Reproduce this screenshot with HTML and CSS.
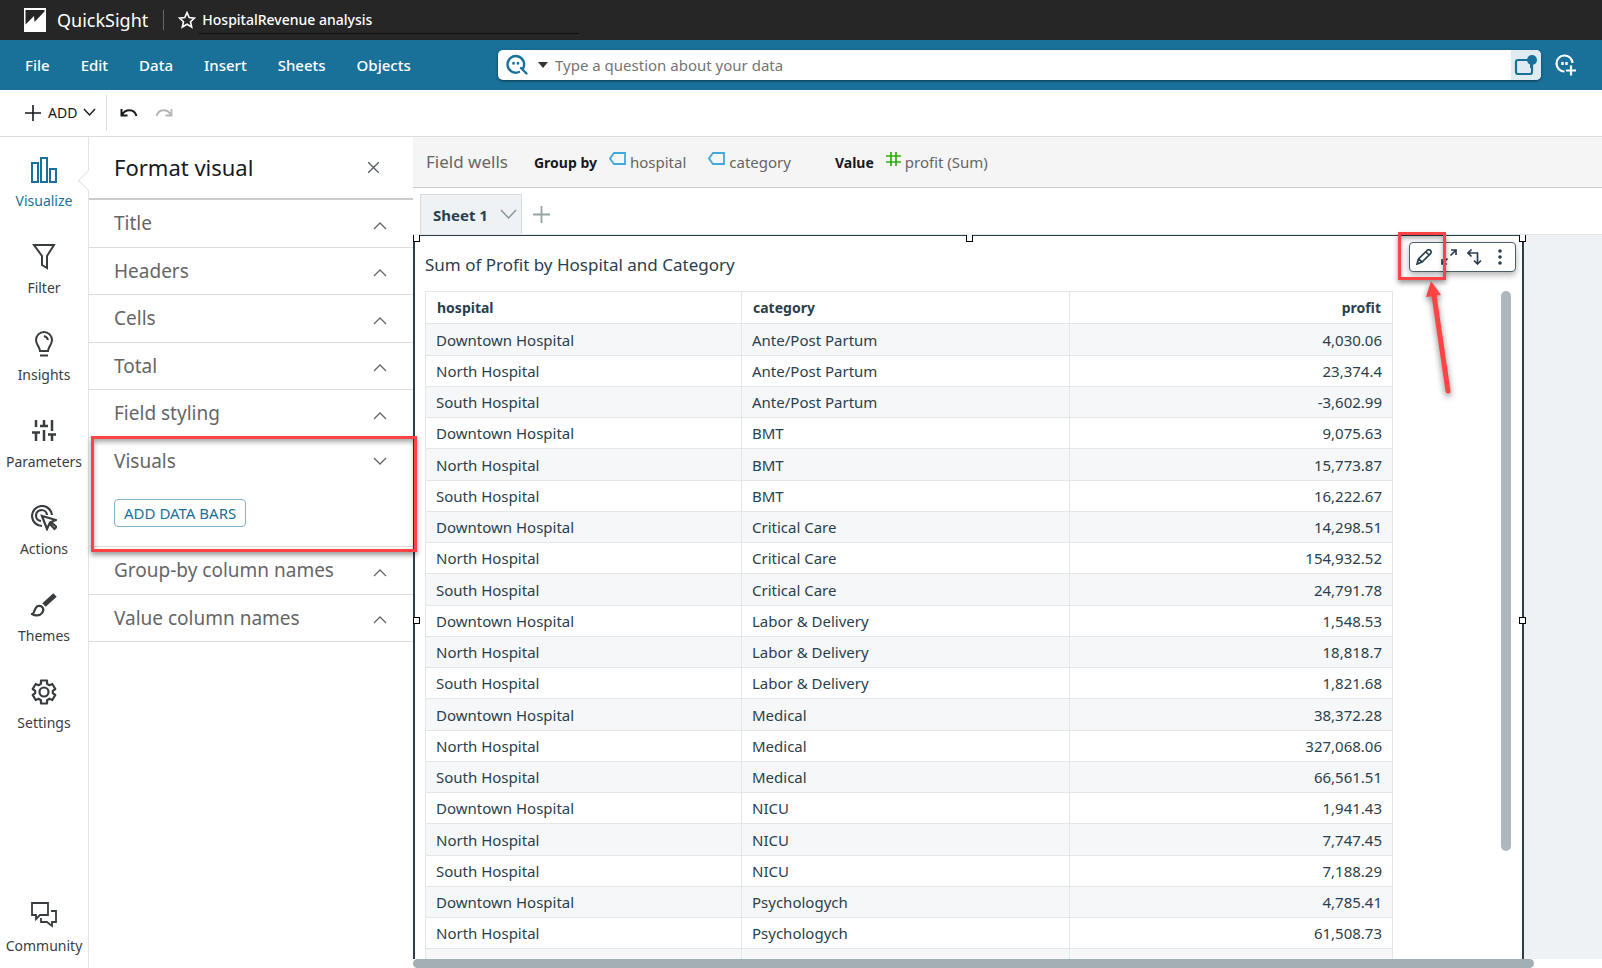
FILE: index.html
```html
<!DOCTYPE html>
<html lang="en">
<head>
  <meta charset="utf-8">
  <title>QuickSight</title>
  <link rel="stylesheet" href="styles.css">
</head>
<body>
  <header class="topbar">
    <svg class="logo" width="22" height="24" viewBox="0 0 22 24"><path fill="#fff" fill-rule="evenodd" d="M0 0h22v24H0zM1.500 2v14.500L10 8l.5 6L20.500 3.500V2z"/></svg>
    <span class="brand">QuickSight</span>
    <button class="star" aria-label="Favorite"><svg width="18" height="18" viewBox="0 0 18 18"><path d="M9 1.600l2.200 5 5.300.5-4 3.600 1.200 5.300L9 13.200l-4.700 2.800 1.200-5.300-4-3.600 5.300-.5z" fill="none" stroke="#fff" stroke-width="1.600"/></svg></button>
    <input class="analysisName" type="text" value="HospitalRevenue analysis" aria-label="Analysis name">
  </header>

  <nav class="menubar">
    <div class="menus">
      <button>File</button>
      <button>Edit</button>
      <button>Data</button>
      <button>Insert</button>
      <button>Sheets</button>
      <button>Objects</button>
    </div>
    <div class="search">
      <button class="topic" aria-label="Topic">
        <svg width="22" height="22" viewBox="0 0 22 22" fill="none" stroke="#19719a" stroke-width="2.400" stroke-linecap="round"><path d="M13 18A8.300 8.300 0 1 1 17 14.500M15 14l5.500 5.500"/><path d="M7.500 9v.5M12 9v.5" stroke-width="2.600"/></svg>
        <svg width="10" height="6" viewBox="0 0 10 6"><path d="M0 0h10L5 6z" fill="#333"/></svg>
      </button>
      <input type="text" placeholder="Type a question about your data" aria-label="Ask a question">
      <button class="pin" aria-label="Pinboard"><svg width="24" height="24" viewBox="0 0 24 24"><rect x="2" y="7" width="16" height="14" rx="2" fill="none" stroke="#19719a" stroke-width="2.200"/><circle cx="18" cy="7" r="5" fill="#19719a"/><path d="M17.500 9v6" stroke="#19719a" stroke-width="3"/></svg></button>
    </div>
    <button class="ask" aria-label="New topic"><svg width="22" height="22" viewBox="0 0 22 22" fill="none" stroke="#fff" stroke-width="2.200"><path d="M9.500 17.500A8 8 0 1 1 17.500 9"/><path d="M7.500 8v3M11.500 8v3" stroke-width="2.400"/><path d="M11 16.500h10M16 11.500v10"/></svg></button>
  </nav>

  <div class="toolbar">
    <button class="add">
      <svg width="18" height="18" viewBox="0 0 18 18"><path d="M9 1v16M1 9h16" stroke="#16191f" stroke-width="1.600"/></svg>
      <span>ADD</span>
      <svg width="13" height="9" viewBox="0 0 13 9"><path d="M1 1l5.500 6L12 1" fill="none" stroke="#16191f" stroke-width="1.400"/></svg>
    </button>
    <button class="undo" aria-label="Undo"><svg width="18" height="10" viewBox="0 0 18 10" fill="none" stroke="#16191f" stroke-width="2"><path d="M1.500 1v6.500h6M2 7C5 1 14 0 16.500 8"/></svg></button>
    <button class="redo" aria-label="Redo" disabled><svg width="18" height="10" viewBox="0 0 18 10" fill="none" stroke="#b4b4b4" stroke-width="1.800"><path d="M16.500 1v6.500h-6M16 7C13 1 4 0 1.500 8"/></svg></button>
  </div>

  <div class="workspace">
    <nav class="rail">
      <a class="active" href="#"><svg width="26" height="26" viewBox="0 0 26 26" fill="none" stroke="#19719a" stroke-width="2"><path d="M1 6h6v19H1zM10 1h6v24h-6zM19 12h6v13h-6z"/></svg>Visualize</a>
      <a href="#"><svg width="26" height="26" viewBox="0 0 26 26" fill="none" stroke="#3a3d40" stroke-width="2"><path d="M3 1h20l-7 11v12l-5-3v-9z"/></svg>Filter</a>
      <a href="#"><svg width="26" height="26" viewBox="0 0 26 26" fill="none" stroke="#3a3d40" stroke-width="2"><path d="M9 20c0-4-4-6-4-11a8 8 0 0 1 16 0c0 5-4 7-4 11zM9 24.500h8M13 5c2 .5 3.500 2 4 4"/></svg>Insights</a>
      <a href="#"><svg width="26" height="26" viewBox="0 0 26 26" fill="none" stroke="#3a3d40" stroke-width="2.500"><path d="M5 2v7M1 14.500h8M5 14v9M13 2v6M9 8h8M13 12v11M21 2v11M17 16.500h8M21 16v7"/></svg>Parameters</a>
      <a href="#"><svg width="26" height="26" viewBox="0 0 26 26" fill="none" stroke="#3a3d40" stroke-width="2.200"><path d="M11 21A10 10 0 1 1 21 10M10 16a5.500 5.500 0 1 1 6-6"/><path d="M11 11l5 13 2.500-5.500 5 5.500 2-2-5.500-5 5-2z" fill="#fff"/></svg>Actions</a>
      <a href="#"><svg width="26" height="26" viewBox="0 0 26 26" fill="none" stroke="#3a3d40" stroke-width="2.200"><path d="M24 3L13 13" stroke-width="5"/><path d="M1 22c3 0 2-7 6-8 4-1 7 3 4 7-2 3-7 3-10 1z"/></svg>Themes</a>
      <a href="#"><svg width="26" height="26" viewBox="0 0 26 26" fill="none" stroke="#3a3d40" stroke-width="2.200"><path d="M10 1.500h6v3.200l2.500 1.500L21.300 5l3 5-2.500 1.800v2.400l2.500 1.800-3 5-2.800-1.200-2.500 1.500v3.200h-6v-3.200l-2.500-1.500L4.700 21l-3-5 2.500-1.800v-2.400L1.700 10l3-5 2.800 1.200L10 4.700z" stroke-linejoin="round"/><circle cx="13" cy="13" r="4.500"/></svg>Settings</a>
      <a class="community" href="#"><svg width="26" height="26" viewBox="0 0 26 26" fill="none" stroke="#3a3d40" stroke-width="1.800"><path d="M1 1h16v12H9l-4 4v-4H1z"/><path d="M20 9h5v11h-4v4l-5-4h-6v-4"/></svg>Community</a>
    </nav>

    <aside class="panel">
      <div class="panelHead">
        <h2>Format visual</h2>
        <button class="close" aria-label="Close"><svg width="11" height="11" viewBox="0 0 11 11"><path d="M0 0l11 11M11 0L0 11" stroke="#545b64" stroke-width="1.300"/></svg></button>
      </div>
      <button class="section">Title<svg width="14" height="8" viewBox="0 0 14 8"><path d="M1 7l6-6 6 6"/></svg></button>
      <button class="section">Headers<svg width="14" height="8" viewBox="0 0 14 8"><path d="M1 7l6-6 6 6"/></svg></button>
      <button class="section">Cells<svg width="14" height="8" viewBox="0 0 14 8"><path d="M1 7l6-6 6 6"/></svg></button>
      <button class="section">Total<svg width="14" height="8" viewBox="0 0 14 8"><path d="M1 7l6-6 6 6"/></svg></button>
      <button class="section">Field styling<svg width="14" height="8" viewBox="0 0 14 8"><path d="M1 7l6-6 6 6"/></svg></button>
      <div class="openSection">
        <button class="section">Visuals<svg width="14" height="8" viewBox="0 0 14 8"><path d="M1 1l6 6 6-6"/></svg></button>
        <button class="dataBars">ADD DATA BARS</button>
        <div class="mark markSection"></div>
      </div>
      <button class="section">Group-by column names<svg width="14" height="8" viewBox="0 0 14 8"><path d="M1 7l6-6 6 6"/></svg></button>
      <button class="section">Value column names<svg width="14" height="8" viewBox="0 0 14 8"><path d="M1 7l6-6 6 6"/></svg></button>
    </aside>

    <main class="content">
      <div class="wells">
        <span class="wellsTitle">Field wells</span>
        <b>Group by</b>
        <span class="field"><svg width="17" height="13" viewBox="0 0 17 13"><path d="M5 1h11v11H5L1 6.500z" fill="none" stroke="#3fa9dc" stroke-width="1.800"/></svg>hospital</span>
        <span class="field"><svg width="17" height="13" viewBox="0 0 17 13"><path d="M5 1h11v11H5L1 6.500z" fill="none" stroke="#3fa9dc" stroke-width="1.800"/></svg>category</span>
        <b class="valueLabel">Value</b>
        <span class="field"><svg width="15" height="14" viewBox="0 0 15 14"><path d="M5 0v14M10 0v14M0 4h15M0 10h15" stroke="#2fae0c" stroke-width="1.700"/></svg>profit (Sum)</span>
      </div>
      <div class="tabs">
        <button class="tab">Sheet 1<svg width="17" height="11" viewBox="0 0 17 11"><path d="M1 1l7.500 8L16 1" fill="none" stroke="#879596" stroke-width="1.500"/></svg></button>
        <button class="newTab" aria-label="Add sheet"><svg width="17" height="17" viewBox="0 0 17 17"><path d="M8.500 0v17M0 8.500h17" stroke="#95a5a6" stroke-width="1.800"/></svg></button>
      </div>
      <div class="canvas">
        <section class="visual">
          <h3>Sum of Profit by Hospital and Category</h3>
          <div class="tableWrap">
            <table>
              <thead><tr><th class="hospital">hospital</th><th class="category">category</th><th class="num">profit</th></tr></thead>
              <tbody>
                <tr><td>Downtown Hospital</td><td>Ante/Post Partum</td><td class="num">4,030.06</td></tr>
                <tr><td>North Hospital</td><td>Ante/Post Partum</td><td class="num">23,374.4</td></tr>
                <tr><td>South Hospital</td><td>Ante/Post Partum</td><td class="num">-3,602.99</td></tr>
                <tr><td>Downtown Hospital</td><td>BMT</td><td class="num">9,075.63</td></tr>
                <tr><td>North Hospital</td><td>BMT</td><td class="num">15,773.87</td></tr>
                <tr><td>South Hospital</td><td>BMT</td><td class="num">16,222.67</td></tr>
                <tr><td>Downtown Hospital</td><td>Critical Care</td><td class="num">14,298.51</td></tr>
                <tr><td>North Hospital</td><td>Critical Care</td><td class="num">154,932.52</td></tr>
                <tr><td>South Hospital</td><td>Critical Care</td><td class="num">24,791.78</td></tr>
                <tr><td>Downtown Hospital</td><td>Labor &amp; Delivery</td><td class="num">1,548.53</td></tr>
                <tr><td>North Hospital</td><td>Labor &amp; Delivery</td><td class="num">18,818.7</td></tr>
                <tr><td>South Hospital</td><td>Labor &amp; Delivery</td><td class="num">1,821.68</td></tr>
                <tr><td>Downtown Hospital</td><td>Medical</td><td class="num">38,372.28</td></tr>
                <tr><td>North Hospital</td><td>Medical</td><td class="num">327,068.06</td></tr>
                <tr><td>South Hospital</td><td>Medical</td><td class="num">66,561.51</td></tr>
                <tr><td>Downtown Hospital</td><td>NICU</td><td class="num">1,941.43</td></tr>
                <tr><td>North Hospital</td><td>NICU</td><td class="num">7,747.45</td></tr>
                <tr><td>South Hospital</td><td>NICU</td><td class="num">7,188.29</td></tr>
                <tr><td>Downtown Hospital</td><td>Psychologych</td><td class="num">4,785.41</td></tr>
                <tr><td>North Hospital</td><td>Psychologych</td><td class="num">61,508.73</td></tr>
                <tr><td></td><td></td><td></td></tr>
              </tbody>
            </table>
            <div class="vscroll"></div>
          </div>
          <i class="handle tl"></i><i class="handle tc"></i><i class="handle tr"></i>
          <i class="handle ml"></i><i class="handle mr"></i>
          <div class="actions">
            <button aria-label="Format visual"><svg width="16" height="16" viewBox="0 0 16 16"><path d="M1 15l1.500-5L11 1.500a1.800 1.800 0 0 1 3.500 3.200L6 13zM10 3l3 3M2.500 10L6 13"/></svg></button>
            <button aria-label="Maximize"><svg width="16" height="16" viewBox="0 0 16 16"><path d="M9.500 6.500L15 1M10 1h5v5M6.500 9.500L1 15M1 10v5h5"/></svg></button>
            <button aria-label="Drill"><svg width="16" height="16" viewBox="0 0 16 16"><path d="M1 4h9.500v11M4.500 .5L1 4l3.500 3.500M7 11.500l3.500 3.500 3.500-3.500"/></svg></button>
            <button aria-label="Menu"><svg class="dots" width="16" height="16" viewBox="0 0 16 16"><circle cx="8" cy="2" r="1.800"/><circle cx="8" cy="8" r="1.800"/><circle cx="8" cy="14" r="1.800"/></svg></button>
          </div>
          <div class="mark markEdit"></div>
          <svg class="arrow" width="30" height="116" viewBox="0 0 30 116"><path d="M8 14L22 110" stroke="#fd4343" stroke-width="5" stroke-linecap="round"/><path d="M5 0L15 14 0 16z" fill="#fd4343"/></svg>
        </section>
      </div>
      <div class="hscroll"></div>
    </main>
  </div>
</body>
</html>
```
FILE: styles.css
```css
* { box-sizing: border-box; }
body { margin: 0; height: 100vh; display: flex; flex-direction: column; overflow: hidden; font-family: "Noto Sans", "Open Sans", sans-serif; font-size: 14px; color: #16191f; background: #fff; }
button { font: inherit; color: inherit; background: none; border: none; padding: 0; display: flex; align-items: center; }
input { font: inherit; border: none; outline: none; background: none; padding: 0; }
svg { flex: none; }

.topbar { flex: none; height: 40px; background: #262626; color: #fff; display: flex; align-items: center; padding-left: 24px; }
.brand { font-size: 18px; margin-left: 11px; padding-right: 15px; border-right: 1px solid #666; line-height: 20px; }
.star { margin: 0 3px 0 14px; }
.analysisName { color: #fff; font-weight: 500; width: 380px; height: 28px; padding-left: 3px; border-bottom: 1px solid #111; }

.menubar { flex: none; height: 50px; background: #19719a; color: #fff; display: flex; align-items: center; padding-right: 25px; }
.menus { display: flex; gap: 31px; width: 473px; margin-left: 25px; font-size: 15px; font-weight: 500; }
.search { flex: 1; height: 30px; display: flex; background: #fff; border-radius: 5px; overflow: hidden; box-shadow: 0 1px 3px rgba(0, 0, 0, 0.5); }
.search input { flex: 1; color: #687078; font-size: 15px; }
.topic { gap: 10px; padding: 0 7px 0 8px; }
.pin { background: #dfebf0; padding: 0 3px; }
.ask { margin-left: 14px; }

.toolbar { flex: none; height: 47px; border-bottom: 1px solid #ddd; display: flex; align-items: center; }
.add { height: 36px; padding: 0 10px 1px 24px; gap: 6px; border-right: 1px solid #ddd; }
.undo { margin-left: 13px; }
.redo { margin-left: 17px; }

.workspace { flex: 1; min-height: 0; display: flex; }
.rail { width: 89px; flex: none; border-right: 1px solid #e3e3e3; display: flex; flex-direction: column; padding: 20px 0 10px; position: relative; }
.rail a { display: flex; flex-direction: column; align-items: center; gap: 8px; height: 87px; color: #3a3d40; text-decoration: none; line-height: 20px; }
.rail a.active { color: #19719a; }
.rail a.active::after { content: ""; position: absolute; right: -8px; top: 36px; width: 14px; height: 14px; background: #fff; border: solid #e3e3e3; border-width: 0 0 1px 1px; transform: rotate(45deg); }
.rail a.community { margin-top: auto; height: 56px; }

.panel { width: 324px; flex: none; }
.panelHead { height: 63px; display: flex; align-items: center; justify-content: space-between; padding: 0 34px 0 25px; border-bottom: 2px solid #ccc; }
.panelHead h2 { margin: 0; padding-bottom: 2px; font-size: 22px; font-weight: 400; }
.section { width: 100%; height: 47px; padding: 0 26px 1px 25px; justify-content: space-between; font-size: 19px; color: #666; border-bottom: 1px solid #ddd; }
.section:nth-child(even) { height: 48px; }
.section svg { fill: none; stroke: #666; stroke-width: 1.3; margin-top: 5px; }
.openSection { position: relative; height: 109px; border-bottom: 1px solid #ddd; }
.openSection .section { border-bottom: none; }
.openSection .section svg { margin-top: 0; }
.dataBars { margin: 14px 0 0 25px; height: 28px; padding: 0 9px; border: 1px solid #7fb3cb; border-radius: 4px; color: #19719a; font-size: 15px; }

.content { flex: 1; min-width: 0; display: flex; flex-direction: column; }
.wells { flex: none; height: 51px; background: #f5f5f5; border-bottom: 1px solid #ccc; display: flex; align-items: center; padding-left: 13px; }
.wells b { margin-right: 12px; }
.wellsTitle { font-size: 17px; color: #666; margin-right: 26px; padding-bottom: 2px; }
.field { color: #666; font-size: 15px; display: flex; gap: 4px; margin-right: 22px; }
.wells .valueLabel { margin-left: 22px; }
.tabs { flex: none; height: 47px; display: flex; align-items: flex-end; padding-left: 7px; border-bottom: 1px solid #e3e7e9; }
.tab { height: 40px; padding: 0 4px 0 12px; gap: 12px; background: #eef2f5; border: 1px solid #d5dbdf; border-bottom: none; font-size: 15px; font-weight: 700; color: #2a3f4d; }
.newTab { height: 40px; margin-left: 11px; }

.canvas { flex: 1; min-height: 0; background: #eef2f5; padding-right: 78px; }
.visual { position: relative; height: 100%; background: #fff; border: solid #2a3f4d; border-width: 1px 2px 0; padding: 16px 11px 0 10px; color: #2a3f4d; display: flex; flex-direction: column; }
.visual h3 { margin: 0; font-size: 17px; line-height: 26px; font-weight: 400; }
.tableWrap { flex: 1; min-height: 0; margin-top: 13px; overflow: hidden; display: flex; justify-content: space-between; }
table { width: 968px; border-collapse: collapse; table-layout: fixed; align-self: flex-start; }
th, td { height: 31px; padding: 0 10px; border: 1px solid #e3e7e9; text-align: left; }
th { height: 32px; padding: 0 11px; }
td { font-size: 15px; }
th.hospital { width: 316px; }
th.category { width: 328px; }
tbody tr:nth-child(odd) { background: #f5f7f9; }
tbody tr:nth-child(4n+1) td { height: 32px; }
th.num, td.num { text-align: right; }
.vscroll { width: 10px; height: 560px; border-radius: 5px; background: #aeb7be; }
.hscroll { flex: none; height: 9px; margin-right: 68px; background: #a4afb5; border-radius: 5px; }

.handle { position: absolute; width: 7px; height: 7px; background: #fff; border: 1px solid #000; }
.tl, .tc, .tr { top: -1px; border-top: none; }
.tl { left: -2px; }
.tc { left: calc(50% - 3px); }
.tr { right: -4px; }
.ml { left: -2px; top: 381px; }
.mr { right: -4px; top: 381px; }
.actions { position: absolute; right: 6px; top: 6px; width: 107px; height: 30px; display: flex; align-items: center; justify-content: space-between; padding: 0 7px 0 6px; background: #fff; border: 1px solid #4b5f6c; border-radius: 4px; box-shadow: 0 3px 6px rgba(0, 0, 0, 0.3); }
.actions svg { fill: none; stroke: #2a3f4d; stroke-width: 1.7; display: block; }
.actions .dots { fill: #2a3f4d; stroke: none; }
.mark { position: absolute; border: 3px solid #fd4343; box-shadow: 0 3px 5px rgba(0, 0, 0, 0.4), inset 0 3px 5px rgba(0, 0, 0, 0.35); z-index: 2; }
.markSection { left: 2px; right: -4px; top: -2px; bottom: -6px; }
.markEdit { right: 76px; top: -4px; width: 48px; height: 48px; }
.arrow { position: absolute; right: 66px; top: 45px; z-index: 2; filter: drop-shadow(0 3px 3px rgba(0, 0, 0, 0.5)); }
```
